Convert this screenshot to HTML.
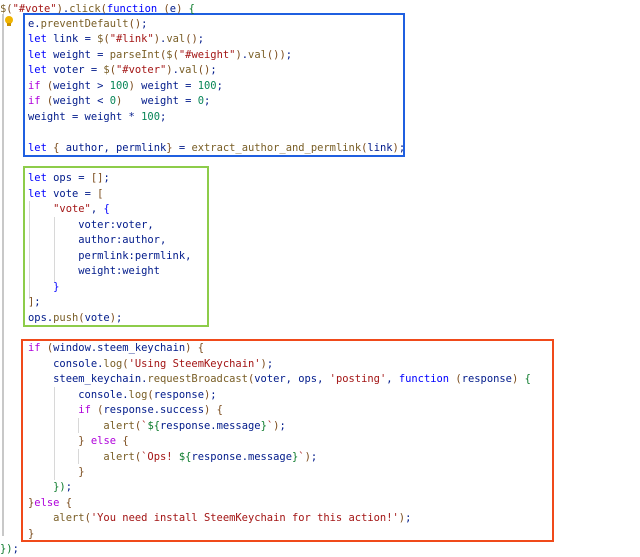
<!DOCTYPE html>
<html><head><meta charset="utf-8"><style>
html,body{margin:0;padding:0;background:#fff;width:640px;height:557px;overflow:hidden;position:relative}
.l{position:absolute;left:0;white-space:pre;font-family:"DejaVu Sans Mono","Liberation Mono",monospace;font-size:10.45px;line-height:15px;color:#001a8a}
.k{color:#0000ff}.c{color:#af00db}.s{color:#a31515}.n{color:#098658}.m{color:#795e26}.p{color:#7a4a1a}.g{color:#0a7a2a}
.box{position:absolute;border:2px solid}
.guide{position:absolute;width:1px;background:#d8d8d8}
</style></head><body>
<div class="guide" style="left:2px;top:14px;height:522px;width:2px;background:#c8c8c8"></div>
<div class="guide" style="left:29px;top:201px;height:98px"></div>
<div class="guide" style="left:54px;top:217px;height:66px"></div>
<div class="guide" style="left:54px;top:387px;height:93px"></div>
<div class="guide" style="left:78px;top:418px;height:15px"></div>
<div class="guide" style="left:78px;top:449px;height:15px"></div>
<div style="position:absolute;left:5px;top:16px;width:8px;height:8px;border-radius:50%;background:#f0b400"></div>
<div style="position:absolute;left:7px;top:23px;width:4px;height:3px;background:#c89000"></div>
<div class="box" style="left:23px;top:13px;width:378px;height:140px;border-color:#1f5fe0"></div>
<div class="box" style="left:23px;top:166px;width:182px;height:157px;border-color:#8dcc4a"></div>
<div class="box" style="left:21px;top:339px;width:529px;height:199px;border-color:#f04a1a"></div>
<div id="c"></div>
<script>
const L=[
[0,'<span class="m">$</span><span class="p">(</span><span class="s">"#vote"</span><span class="p">)</span>.<span class="m">click</span><span class="p">(</span><span class="k">function</span> <span class="p">(</span>e<span class="p">)</span> <span class="g">{</span>'],
[28,'e.<span class="m">preventDefault</span><span class="p">()</span>;'],
[28,'<span class="k">let</span> link = <span class="m">$</span><span class="p">(</span><span class="s">"#link"</span><span class="p">)</span>.<span class="m">val</span><span class="p">()</span>;'],
[28,'<span class="k">let</span> weight = <span class="m">parseInt</span><span class="p">(</span><span class="m">$</span><span class="p">(</span><span class="s">"#weight"</span><span class="p">)</span>.<span class="m">val</span><span class="p">())</span>;'],
[28,'<span class="k">let</span> voter = <span class="m">$</span><span class="p">(</span><span class="s">"#voter"</span><span class="p">)</span>.<span class="m">val</span><span class="p">()</span>;'],
[28,'<span class="c">if</span> <span class="p">(</span>weight &gt; <span class="n">100</span><span class="p">)</span> weight = <span class="n">100</span>;'],
[28,'<span class="c">if</span> <span class="p">(</span>weight &lt; <span class="n">0</span><span class="p">)</span>   weight = <span class="n">0</span>;'],
[28,'weight = weight * <span class="n">100</span>;'],
[28,''],
[28,'<span class="k">let</span> <span class="p">{</span> author, permlink<span class="p">}</span> = <span class="m">extract_author_and_permlink</span><span class="p">(</span>link<span class="p">)</span>;'],
[28,''],
[28,'<span class="k">let</span> ops = <span class="p">[]</span>;'],
[28,'<span class="k">let</span> vote = <span class="p">[</span>'],
[28,'    <span class="s">"vote"</span>, <span class="k">{</span>'],
[28,'        voter:voter,'],
[28,'        author:author,'],
[28,'        permlink:permlink,'],
[28,'        weight:weight'],
[28,'    <span class="k">}</span>'],
[28,'<span class="p">]</span>;'],
[28,'ops.<span class="m">push</span><span class="p">(</span>vote<span class="p">)</span>;'],
[28,''],
[28,'<span class="c">if</span> <span class="p">(</span>window.steem_keychain<span class="p">)</span> <span class="p">{</span>'],
[28,'    console.<span class="m">log</span><span class="p">(</span><span class="s">\'Using SteemKeychain\'</span><span class="p">)</span>;'],
[28,'    steem_keychain.<span class="m">requestBroadcast</span><span class="p">(</span>voter, ops, <span class="s">\'posting\'</span>, <span class="k">function</span> <span class="p">(</span>response<span class="p">)</span> <span class="g">{</span>'],
[28,'        console.<span class="m">log</span><span class="p">(</span>response<span class="p">)</span>;'],
[28,'        <span class="c">if</span> <span class="p">(</span>response.success<span class="p">)</span> <span class="p">{</span>'],
[28,'            <span class="m">alert</span><span class="p">(</span><span class="s">`</span><span class="g">${</span>response.message<span class="g">}</span><span class="s">`</span><span class="p">)</span>;'],
[28,'        <span class="p">}</span> <span class="c">else</span> <span class="p">{</span>'],
[28,'            <span class="m">alert</span><span class="p">(</span><span class="s">`Ops! </span><span class="g">${</span>response.message<span class="g">}</span><span class="s">`</span><span class="p">)</span>;'],
[28,'        <span class="p">}</span>'],
[28,'    <span class="g">})</span>;'],
[28,'<span class="p">}</span><span class="c">else</span> <span class="p">{</span>'],
[28,'    <span class="m">alert</span><span class="p">(</span><span class="s">\'You need install SteemKeychain for this action!\'</span><span class="p">)</span>;'],
[28,'<span class="p">}</span>'],
[0,'<span class="g">})</span>;']
];
let h='';L.forEach((l,i)=>{h+='<div class="l" style="left:'+l[0]+'px;top:'+(1.5+i*15.45)+'px">'+l[1]+'</div>';});
document.getElementById('c').innerHTML=h;
</script>
</body></html>
